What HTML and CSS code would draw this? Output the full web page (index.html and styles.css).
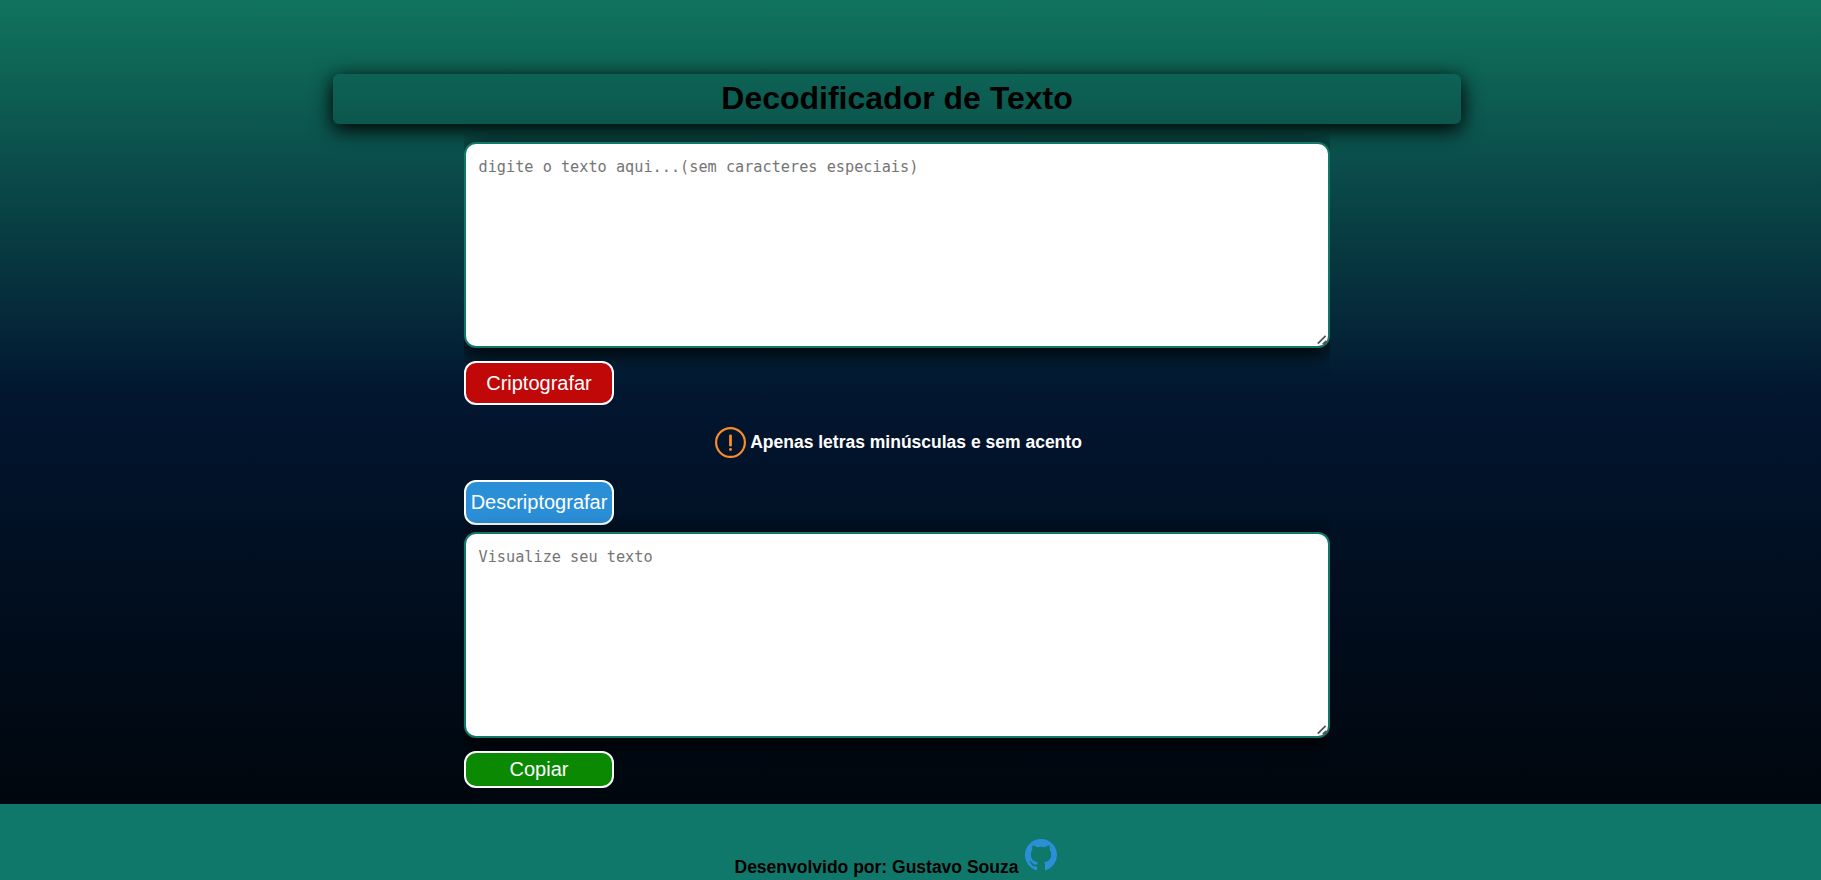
FILE: index.html
```html
<!DOCTYPE html>
<html lang="pt-br">
<head>
<meta charset="UTF-8">
<title>Decodificador de Texto</title>
<link rel="stylesheet" href="styles.css">
</head>
<body>
<header class="cabecalho"><h1 class="titulo">Decodificador de Texto</h1></header>
<main class="conteudo">
  <div class="campo">
    <textarea class="caixa" placeholder="digite o texto aqui...(sem caracteres especiais)"></textarea>
    <svg class="alca" viewBox="0 0 11 11" aria-hidden="true"><path d="M.8 8.7 8.6 .9M5.8 9.2 9.4 5.8M8 9.4 9.8 7.6"/></svg>
  </div>
  <button class="botao criptografar">Criptografar</button>
  <p class="aviso">
    <svg class="alerta" viewBox="0 0 31 31" aria-hidden="true"><circle cx="15.5" cy="15.5" r="14.4"/><path d="M15.5 8.8v9.4"/><path d="M15.5 22.3v.2"/></svg>
    <span>Apenas letras minúsculas e sem acento</span>
  </p>
  <button class="botao descriptografar">Descriptografar</button>
  <div class="campo">
    <textarea class="caixa" placeholder="Visualize seu texto"></textarea>
    <svg class="alca" viewBox="0 0 11 11" aria-hidden="true"><path d="M.8 8.7 8.6 .9M5.8 9.2 9.4 5.8M8 9.4 9.8 7.6"/></svg>
  </div>
  <button class="botao copiar">Copiar</button>
</main>
<footer class="rodape">
  <span class="autor">Desenvolvido por: Gustavo Souza</span>
  <svg class="github" viewBox="0 0 16 16" aria-hidden="true"><path d="M8 0C3.58 0 0 3.58 0 8c0 3.54 2.29 6.53 5.47 7.59.4.07.55-.17.55-.38 0-.19-.01-.82-.01-1.49-2.01.37-2.53-.49-2.69-.94-.09-.23-.48-.94-.82-1.13-.28-.15-.68-.52-.01-.53.63-.01 1.08.58 1.23.82.72 1.21 1.87.87 2.33.66.07-.52.28-.87.51-1.07-1.78-.2-3.64-.89-3.64-3.95 0-.87.31-1.59.82-2.15-.08-.2-.36-1.02.08-2.12 0 0 .67-.21 2.2.82.64-.18 1.32-.27 2-.27s1.36.09 2 .27c1.53-1.04 2.2-.82 2.2-.82.44 1.1.16 1.92.08 2.12.51.56.82 1.27.82 2.15 0 3.07-1.87 3.75-3.65 3.95.29.25.54.73.54 1.48 0 1.07-.01 1.93-.01 2.2 0 .21.15.46.55.38A8.01 8.01 0 0 0 16 8c0-4.42-3.58-8-8-8z"/></svg>
</footer>
</body>
</html>
```
FILE: styles.css
```css
* { box-sizing: border-box; margin: 0; padding: 0; }
body {
  height: 880px;
  overflow: hidden;
  display: flex;
  flex-direction: column;
  font-family: "Liberation Sans", Arial, sans-serif;
  background: linear-gradient(180deg, #10745d 0%, #021630 45%, #00050b 94%);
}
.cabecalho {
  width: 1128px;
  height: 50px;
  flex: none;
  margin: 74px 0 0 333px;
  border-radius: 6px;
  box-shadow: 0 5px 20px 1px #000;
}
.titulo { font-size: 32px; line-height: 48px; text-align: center; color: #000; }
.conteudo {
  width: 866px;
  height: 680px;
  flex: none;
  margin-left: 464px;
  padding-top: 18px;
  overflow: hidden;
  display: flex;
  flex-direction: column;
  align-items: flex-start;
}
.campo { position: relative; flex: none; height: 206px; }
.caixa {
  display: block;
  width: 866px;
  height: 206px;
  padding: 13px 12px 12px 12.5px;
  border: 2px solid #10786a;
  border-radius: 12px;
  background: #fff;
  box-shadow: 0 5px 20px #000;
  font: 15.22px/20px "DejaVu Sans Mono", monospace;
  resize: none;
}
.caixa::placeholder { color: #757575; }
.alca {
  position: absolute;
  right: 2px;
  bottom: 2px;
  width: 11px;
  height: 11px;
  fill: none;
  stroke: #555;
  stroke-width: 1.8;
}
.botao {
  width: 150px;
  flex: none;
  border: 2px solid #fff;
  border-radius: 12px;
  color: #fff;
  font: 20px "Liberation Sans", Arial, sans-serif;
}
.criptografar { position: relative; height: 44px; margin-top: 13px; background: #c00808; }
.descriptografar { height: 45px; margin-bottom: 7px; background: #2b8fd8; }
.copiar { position: relative; height: 37px; margin-top: 13px; background: #0b8903; }
.aviso {
  width: 100%;
  height: 75px;
  display: flex;
  align-items: center;
  justify-content: center;
  gap: 4px;
  padding-left: 3px;
  color: #fff;
  font-size: 17.5px;
  font-weight: bold;
}
.alerta { width: 31px; height: 31px; fill: none; stroke: #fa8c28; stroke-width: 2.2; stroke-linecap: round; }
.alerta path { stroke-width: 2.8; }
.rodape {
  height: 76px;
  flex: none;
  display: flex;
  gap: 7px;
  padding: 35px 0 0 734.5px;
  background: #10786a;
}
.autor { font-size: 17.5px; font-weight: bold; line-height: 20px; padding-top: 18px; color: #000; }
.github { width: 32px; height: 32px; fill: #2b8fd8; }
```
